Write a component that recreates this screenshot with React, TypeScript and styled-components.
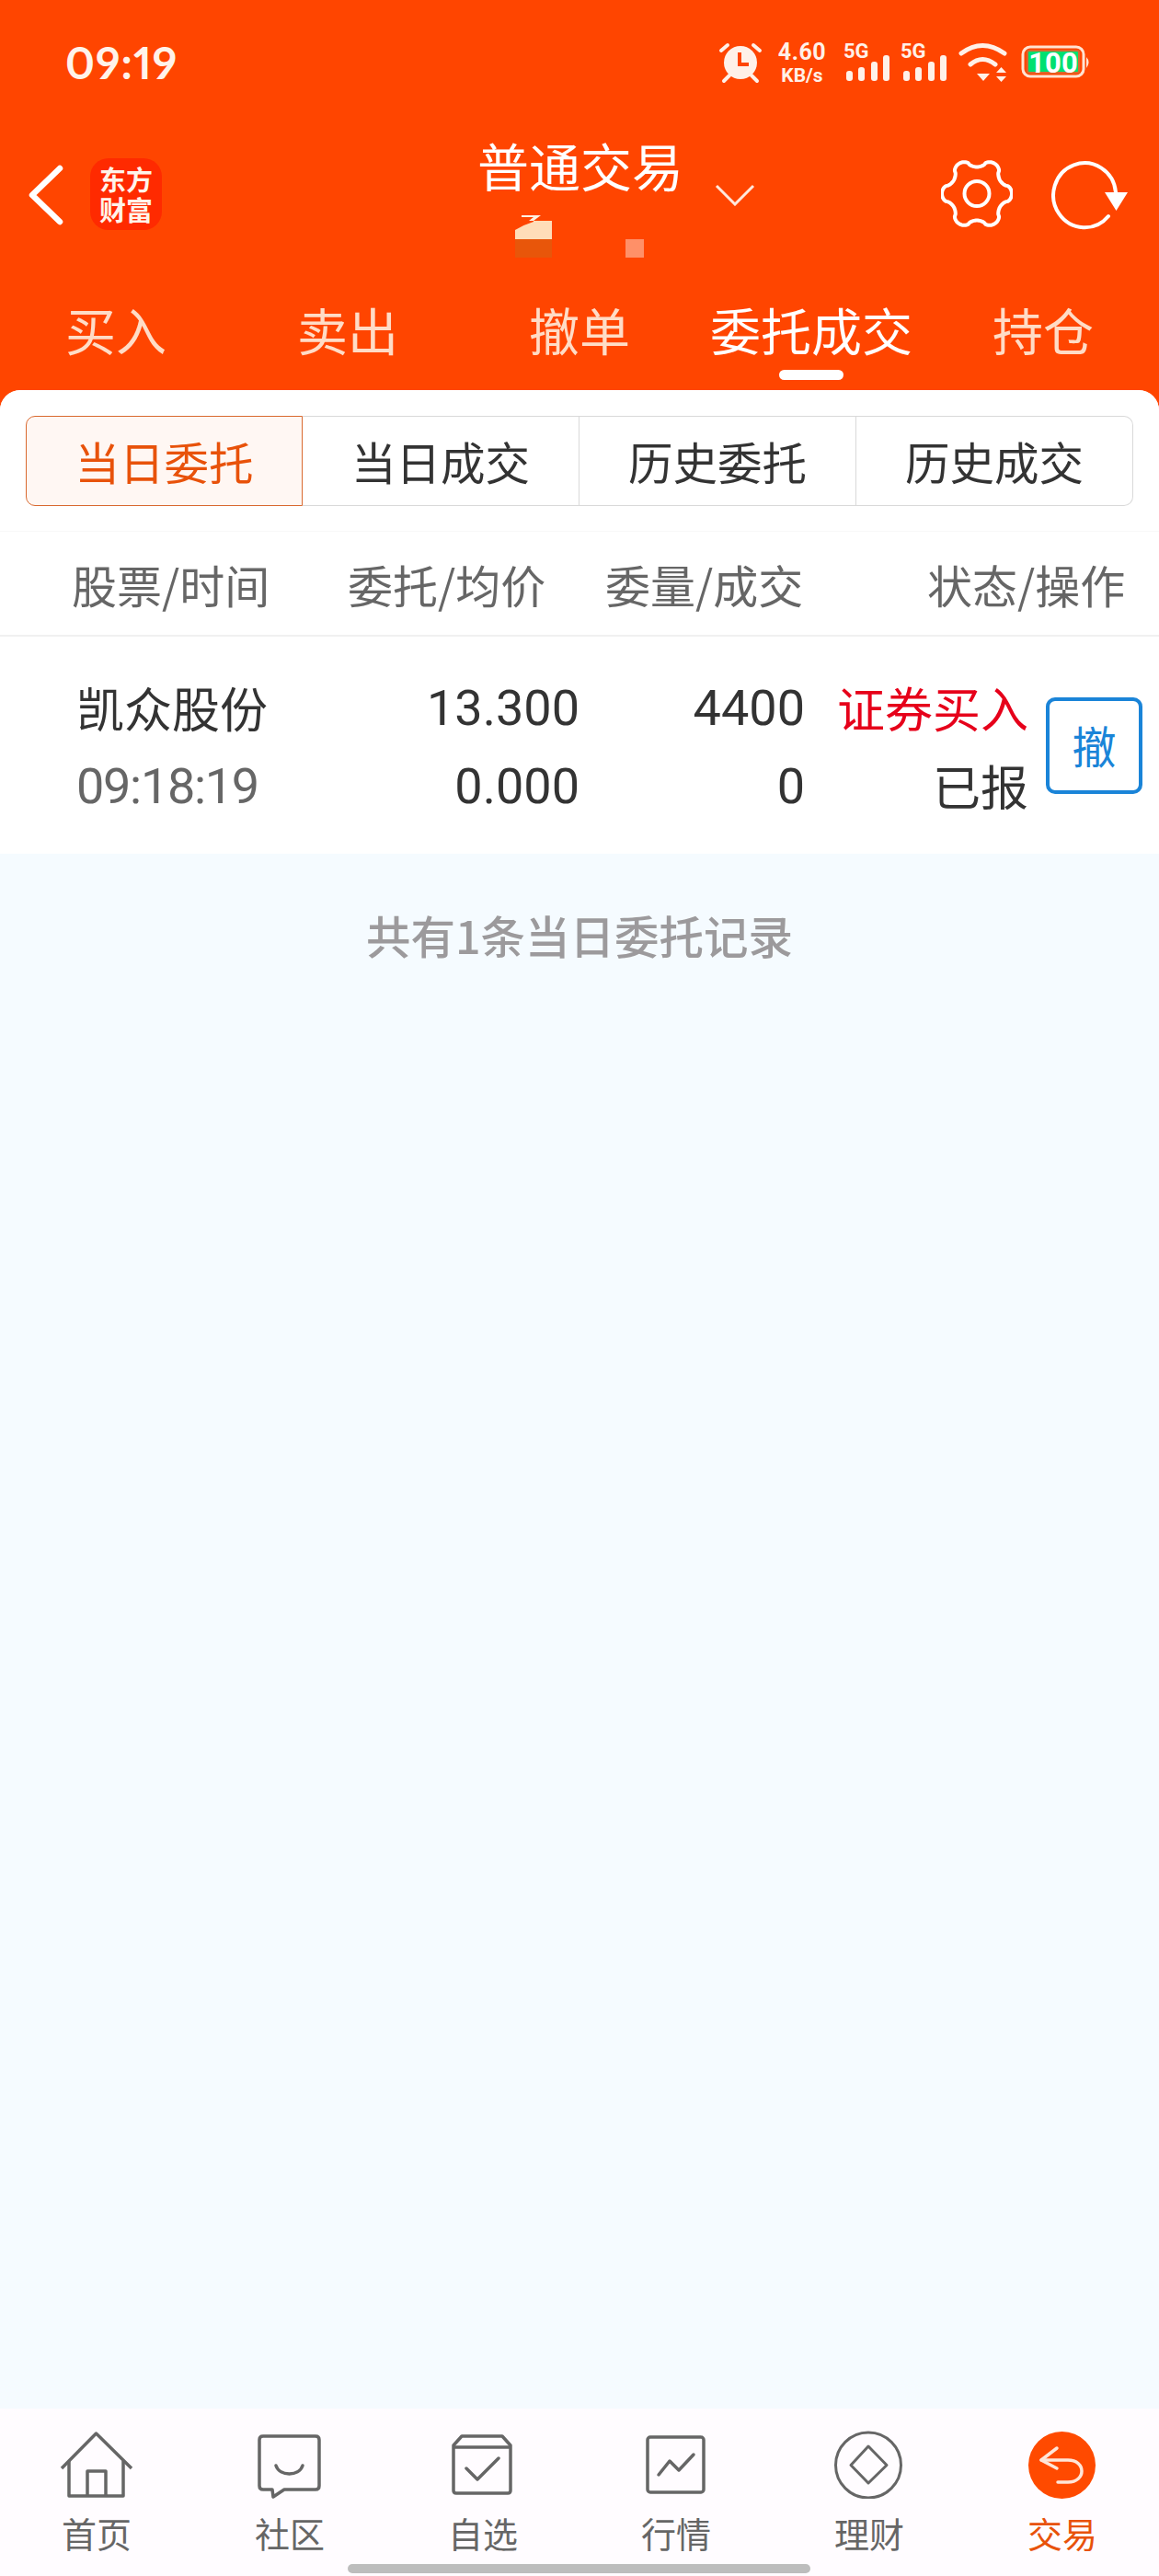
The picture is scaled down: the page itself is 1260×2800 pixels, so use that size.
import React from "react";
import styled, { createGlobalStyle } from "styled-components";

const CJK = `"Noto Sans CJK SC", "Noto Sans", sans-serif`;
const LAT = `Roboto, "Noto Sans CJK SC", sans-serif`;

const Global = createGlobalStyle`
  html, body { margin: 0; padding: 0; }
  body { font-family: ${CJK}; background: #f5fbff; }
`;

const Page = styled.div`
  width: 1260px; height: 2800px; display: flex; flex-direction: column;
  background: #ff4500; overflow: hidden; position: relative;
`;
const StatusBar = styled.div`
  height: 136px; flex: none; display: flex; justify-content: space-between; align-items: flex-start;
  padding: 40px 70px 0 71px; box-sizing: border-box; color: #fff3ea;
`;
const Clock = styled.div`
  font: 700 48px/56px Lato, Roboto, sans-serif; font-feature-settings: "pnum"; letter-spacing: 1px;
`;
const NavBar = styled.div`
  height: 134px; flex: none; display: grid; grid-template-columns: 521px 218px 1fr; align-items: start;
  box-sizing: border-box; padding-top: 36px;
`;
const NavLeft = styled.div` display: flex; padding-left: 30px; `;
const BackBtn = styled.div` width: 68px; height: 66px; margin-top: 7px; flex: none; `;
const Logo = styled.div`
  width: 78px; height: 78px; border-radius: 20px; background: #ff2a00; color: #fff3ea; flex: none;
  box-sizing: border-box; padding: 6px 9px 0; text-align: center;
  font: 700 29px/33px ${CJK};
`;
const Title = styled.div`
  font-size: 56px; line-height: 62px; color: #fff; margin: -24px -2px 0; white-space: nowrap; text-align: center;
`;
const NavRight = styled.div` display: flex; align-items: flex-start; padding-right: 33px; `;
const TitleChevron = styled.svg` margin: 28px 0 0 38px; flex: none; `;
const NavTools = styled.div` display: flex; gap: 42px; align-items: flex-start; margin-left: auto; flex: none; `;
const TabRow = styled.div`
  height: 154px; flex: none; display: grid; grid-template-columns: repeat(5, 252px);
`;
const Tab = styled.div<{ $active?: boolean }>`
  position: relative; text-align: center; font-size: 55px; line-height: 62px; padding-top: 56px; box-sizing: border-box;
  color: ${p => (p.$active ? "#ffffff" : "#ffdcc6")}; height: 154px;
`;
const Indicator = styled.span`
  position: absolute; left: 91px; top: 132px; width: 70px; height: 11px; border-radius: 6px; background: #fff;
`;
const Panel = styled.div`
  flex: 1; display: flex; flex-direction: column; background: #f5fbff; border-radius: 22px 22px 0 0; overflow: hidden;
`;
const Upper = styled.div` background: #fff; flex: none; `;
const SegWrap = styled.div` padding: 28px 28px 27px; border-bottom: 1px solid #f8f8f8; `;
const Segments = styled.div` display: grid; grid-template-columns: repeat(4, 1fr); height: 98px; width: 1204px; `;
const Seg = styled.div<{ $active?: boolean; $first?: boolean; $last?: boolean }>`
  box-sizing: border-box; display: flex; align-items: center; justify-content: center; font-size: 48.5px;
  border: 1px solid ${p => (p.$active ? "#d9692f" : "#d9d9d9")};
  ${p => (p.$active ? "" : "border-left: none;")}
  border-radius: ${p => (p.$first ? "10px 0 0 10px" : p.$last ? "0 10px 10px 0" : "0")};
  background: ${p => (p.$active ? "#fff7f3" : "#fff")};
  color: ${p => (p.$active ? "#e8520a" : "#333")};
`;
const HeadRow = styled.div`
  height: 112px; display: grid; grid-template-columns: 78px 300px 280px 350px 212px; align-items: center;
  font-size: 49px; color: #666; border-bottom: 2px solid #f0f0f0;
`;
const HeadCell = styled.div<{ $col: number }>` grid-column: ${p => p.$col}; white-space: nowrap; `;
const OrderRow = styled.div` height: 236px; display: flex; align-items: stretch; `;
const Col = styled.div<{ $w: number; $left?: boolean }>`
  width: ${p => p.$w}px; flex: none; display: flex; flex-direction: column; padding-top: 35px; box-sizing: border-box;
  align-items: ${p => (p.$left ? "flex-start" : "flex-end")};
  padding-left: ${p => (p.$left ? "83px" : "0")};
`;
const Cell = styled.div<{ $c?: string }>`
  font: 400 54px/85px ${LAT}; color: ${p => p.$c || "#333"}; white-space: nowrap;
`;
const TimeCell = styled(Cell)` letter-spacing: -1.3px; `;
const CnCell = styled(Cell)` font: 400 52px/85px ${CJK}; color: ${p => p.$c || "#333"}; margin-top: -1px; margin-bottom: 1px; `;
const CancelBtn = styled.div`
  width: 105px; height: 105px; box-sizing: border-box; margin: 66px 0 0 19px; padding-bottom: 3px; border: 4px solid #1a84d8; border-radius: 10px;
  color: #1a84d8; font-size: 48px; display: flex; align-items: center; justify-content: center; background: #fff;
`;
const Notice = styled.div`
  text-align: center; font-size: 48.5px; font-weight: 500; color: #9c9a9c; line-height: 56px; margin-top: 60px;
`;
const Spacer = styled.div` flex: 1; `;
const BottomNav = styled.div`
  height: 182px; flex: none; background: #fffcff; display: grid; grid-template-columns: repeat(6, 210px); position: relative;
`;
const NavItem = styled.div<{ $active?: boolean }>`
  display: flex; flex-direction: column; align-items: center; padding-top: 22px; box-sizing: border-box;
  font-size: 38px; line-height: 46px; color: ${p => (p.$active ? "#e8520a" : "#666")};
`;
const NavIconBox = styled.div` height: 76px; display: flex; align-items: center; justify-content: center; margin-bottom: 14px; `;
const HomeBar = styled.div`
  position: absolute; left: 378px; top: 169px; width: 503px; height: 10px; border-radius: 5px; background: #bdbdbd;
`;
const Artifact = styled.svg` position: absolute; left: 0; top: 0; pointer-events: none; `;

const SIGNAL_XS = [0, 13, 27, 40];
const SIGNAL_TOPS = [33, 29, 23, 16];

const Signal = ({ x }: { x: number }) => (
  <g>
    <text x={x - 3} y={19} fontFamily="Roboto, sans-serif" fontWeight="700" fontSize="22">5G</text>
    {SIGNAL_XS.map((dx, i) => (
      <rect key={dx} x={x + dx} y={SIGNAL_TOPS[i]} width="7" height={44 - SIGNAL_TOPS[i]} rx="3" />
    ))}
  </g>
);

const StatusSvg = () => (
  <svg width="410" height="60" viewBox="0 -4 410 60">
    <g fill="#fff1e8">
      <circle cx="25" cy="24" r="18" />
      <path d="M11 5 L4 11 M39 5 L46 11 M13 38 L7 44 M37 38 L43 44" stroke="#fff1e8" strokeWidth="4" strokeLinecap="round" />
      <path d="M24 13 V26 H34" fill="none" stroke="#ff4500" strokeWidth="4" />
      <text x="92" y="21" textAnchor="middle" fontFamily="Roboto, sans-serif" fontWeight="700" fontSize="25" letterSpacing="0.5">4.60</text>
      <text x="92" y="45" textAnchor="middle" fontFamily="Roboto, sans-serif" fontWeight="700" fontSize="21">KB/s</text>
      <Signal x={140} />
      <Signal x={202} />
      <path d="M265 14 Q288 -3 312 14 M275 26 Q288 15 302 26" fill="none" stroke="#fff1e8" strokeWidth="5" strokeLinecap="round" />
      <path d="M282 36 H296 L289 44 Z" />
      <path d="M303 35 L308.5 29 L314 35 Z M303 39 H314 L308.5 45 Z" />
    </g>
    <rect x="332" y="7" width="66" height="32" rx="8" fill="none" stroke="#ffe3d2" strokeWidth="3" />
    <rect x="337" y="11" width="56" height="24" rx="2" fill="#00e070" stroke="#d9682f" strokeWidth="2" />
    <text x="365" y="35" textAnchor="middle" fontFamily="Roboto, sans-serif" fontWeight="700" fontSize="31" fill="#fff">100</text>
    <path d="M401 18 q5 5 0 12 z" fill="#ffe3d2" />
  </svg>
);

const gearPath = (() => {
  const pts: string[] = [];
  for (let i = 0; i < 180; i++) {
    const t = (i / 180) * Math.PI * 2;
    const c = Math.cos(6 * t);
    const r = 33.5 + 4.5 * Math.sign(c) * Math.pow(Math.abs(c), 0.6);
    pts.push(`${(39 + r * Math.cos(t)).toFixed(2)} ${(38.5 + r * Math.sin(t)).toFixed(2)}`);
  }
  return `M${pts.join(" L")} Z`;
})();

const Gear = () => (
  <svg width="78" height="78" viewBox="0 0 78 78" fill="none" stroke="#fff" strokeWidth="4" strokeLinejoin="round">
    <path d={gearPath} />
    <circle cx="39" cy="38.5" r="13.5" />
  </svg>
);
const Refresh = () => (
  <svg width="84" height="80" viewBox="0 0 84 80" fill="none">
    <path d="M62 63 A34 35 0 1 1 70 37" stroke="#fff" strokeWidth="4" strokeLinecap="round" />
    <path d="M58 37 H83 L70.5 57 Z" fill="#fff" />
  </svg>
);

const IcHome = () => (
  <svg width="80" height="76" viewBox="0 0 80 76" fill="none" stroke="#666" strokeWidth="3.5" strokeLinejoin="round">
    <path d="M2 43 L39.5 5 L78 43" />
    <path d="M10 35 V73 H69 V35" />
    <path d="M30 73 V46 H50 V73" />
  </svg>
);
const IcSocial = () => (
  <svg width="70" height="76" viewBox="0 0 70 76" fill="none" stroke="#666" strokeWidth="3.5" strokeLinejoin="round">
    <path d="M6 8 H63 Q67 8 67 12 V62 Q67 66 63 66 H29 L17 74 L16 66 H6 Q2 66 2 62 V12 Q2 8 6 8 Z" />
    <path d="M20 40 C24 52 45 52 49 40" strokeLinecap="round" />
  </svg>
);
const IcPick = () => (
  <svg width="70" height="76" viewBox="0 0 70 76" fill="none" stroke="#666" strokeWidth="3.5" strokeLinejoin="round">
    <path d="M3 18 L12 8 H56 L65 18 V67 Q65 70 62 70 H6 Q3 70 3 67 Z" />
    <path d="M3 20 H65" />
    <path d="M17 43 L29 55 L52 32" strokeLinecap="round" />
  </svg>
);
const IcMarket = () => (
  <svg width="70" height="76" viewBox="0 0 70 76" fill="none" stroke="#666" strokeWidth="3.5" strokeLinejoin="round">
    <rect x="4" y="9" width="61" height="60" rx="3" />
    <path d="M16 50 L28 35 L38 45 L54 28" strokeLinecap="round" />
  </svg>
);
const IcWealth = () => (
  <svg width="80" height="76" viewBox="0 0 80 76" fill="none" stroke="#666" strokeWidth="3">
    <circle cx="39" cy="39.5" r="35.5" />
    <path d="M39 19 L59 39.5 L39 59 L20 39.5 Z" strokeLinejoin="round" />
  </svg>
);
const IcTrade = () => (
  <svg width="80" height="76" viewBox="0 0 80 76" fill="none">
    <circle cx="39.5" cy="39.5" r="36.5" fill="#ff4a00" />
    <path d="M34 21 L17 34 L34 43" stroke="#ffe6d8" strokeWidth="3.5" strokeLinecap="round" strokeLinejoin="round" />
    <path d="M17 34 H46 C66 34 66 58 46 58 H35" stroke="#ffe6d8" strokeWidth="3.5" strokeLinecap="round" />
  </svg>
);

const navItems = [
  { label: "首页", icon: <IcHome /> },
  { label: "社区", icon: <IcSocial /> },
  { label: "自选", icon: <IcPick /> },
  { label: "行情", icon: <IcMarket /> },
  { label: "理财", icon: <IcWealth /> },
  { label: "交易", icon: <IcTrade />, active: true },
];

export default function App() {
  return (
    <Page>
      <Global />
      <StatusBar>
        <Clock>09:19</Clock>
        <StatusSvg />
      </StatusBar>
      <NavBar>
        <NavLeft>
          <BackBtn>
            <svg width="40" height="66" viewBox="0 0 40 66" fill="none">
              <path d="M35 4 L5 33 L35 62" stroke="#fff" strokeWidth="6.5" strokeLinecap="round" strokeLinejoin="round" />
            </svg>
          </BackBtn>
          <Logo>东方财富</Logo>
        </NavLeft>
        <Title>普通交易</Title>
        <NavRight>
          <TitleChevron width="44" height="24" viewBox="0 0 44 24" fill="none">
            <path d="M2 2 L22 22 L42 2" stroke="#ffe8dc" strokeWidth="3" />
          </TitleChevron>
          <NavTools>
            <Gear />
            <Refresh />
          </NavTools>
        </NavRight>
      </NavBar>
      <TabRow>
        <Tab>买入</Tab>
        <Tab>卖出</Tab>
        <Tab>撤单</Tab>
        <Tab $active>委托成交<Indicator /></Tab>
        <Tab>持仓</Tab>
      </TabRow>
      <Panel>
        <Upper>
          <SegWrap>
            <Segments>
              <Seg $active $first>当日委托</Seg>
              <Seg>当日成交</Seg>
              <Seg>历史委托</Seg>
              <Seg $last>历史成交</Seg>
            </Segments>
          </SegWrap>
          <HeadRow>
            <HeadCell $col={2}>股票/时间</HeadCell>
            <HeadCell $col={3}>委托/均价</HeadCell>
            <HeadCell $col={4}>委量/成交</HeadCell>
            <HeadCell $col={5}>状态/操作</HeadCell>
          </HeadRow>
          <OrderRow>
            <Col $w={300} $left>
              <CnCell>凯众股份</CnCell>
              <TimeCell $c="#666">09:18:19</TimeCell>
            </Col>
            <Col $w={330}>
              <Cell>13.300</Cell>
              <Cell>0.000</Cell>
            </Col>
            <Col $w={245}>
              <Cell>4400</Cell>
              <Cell>0</Cell>
            </Col>
            <Col $w={243}>
              <CnCell $c="#e6001a">证券买入</CnCell>
              <CnCell>已报</CnCell>
            </Col>
            <CancelBtn>撤</CancelBtn>
          </OrderRow>
        </Upper>
        <Notice>共有1条当日委托记录</Notice>
        <Spacer />
        <BottomNav>
          {navItems.map(n => (
            <NavItem key={n.label} $active={n.active}>
              <NavIconBox>{n.icon}</NavIconBox>
              {n.label}
            </NavItem>
          ))}
          <HomeBar />
        </BottomNav>
      </Panel>
      <Artifact width="720" height="290">
        <path d="M560 260 V250 Q570 244 580 241 V240 H600 V260 Z" fill="#ffddb8" />
        <path d="M567 234 H588 L580 240 H575 L580 236 H567 Z" fill="#fff2e2" />
        <rect x="560" y="260" width="40" height="20" fill="#e8560a" />
        <rect x="680" y="260" width="20" height="20" fill="#ff9068" />
      </Artifact>
    </Page>
  );
}
